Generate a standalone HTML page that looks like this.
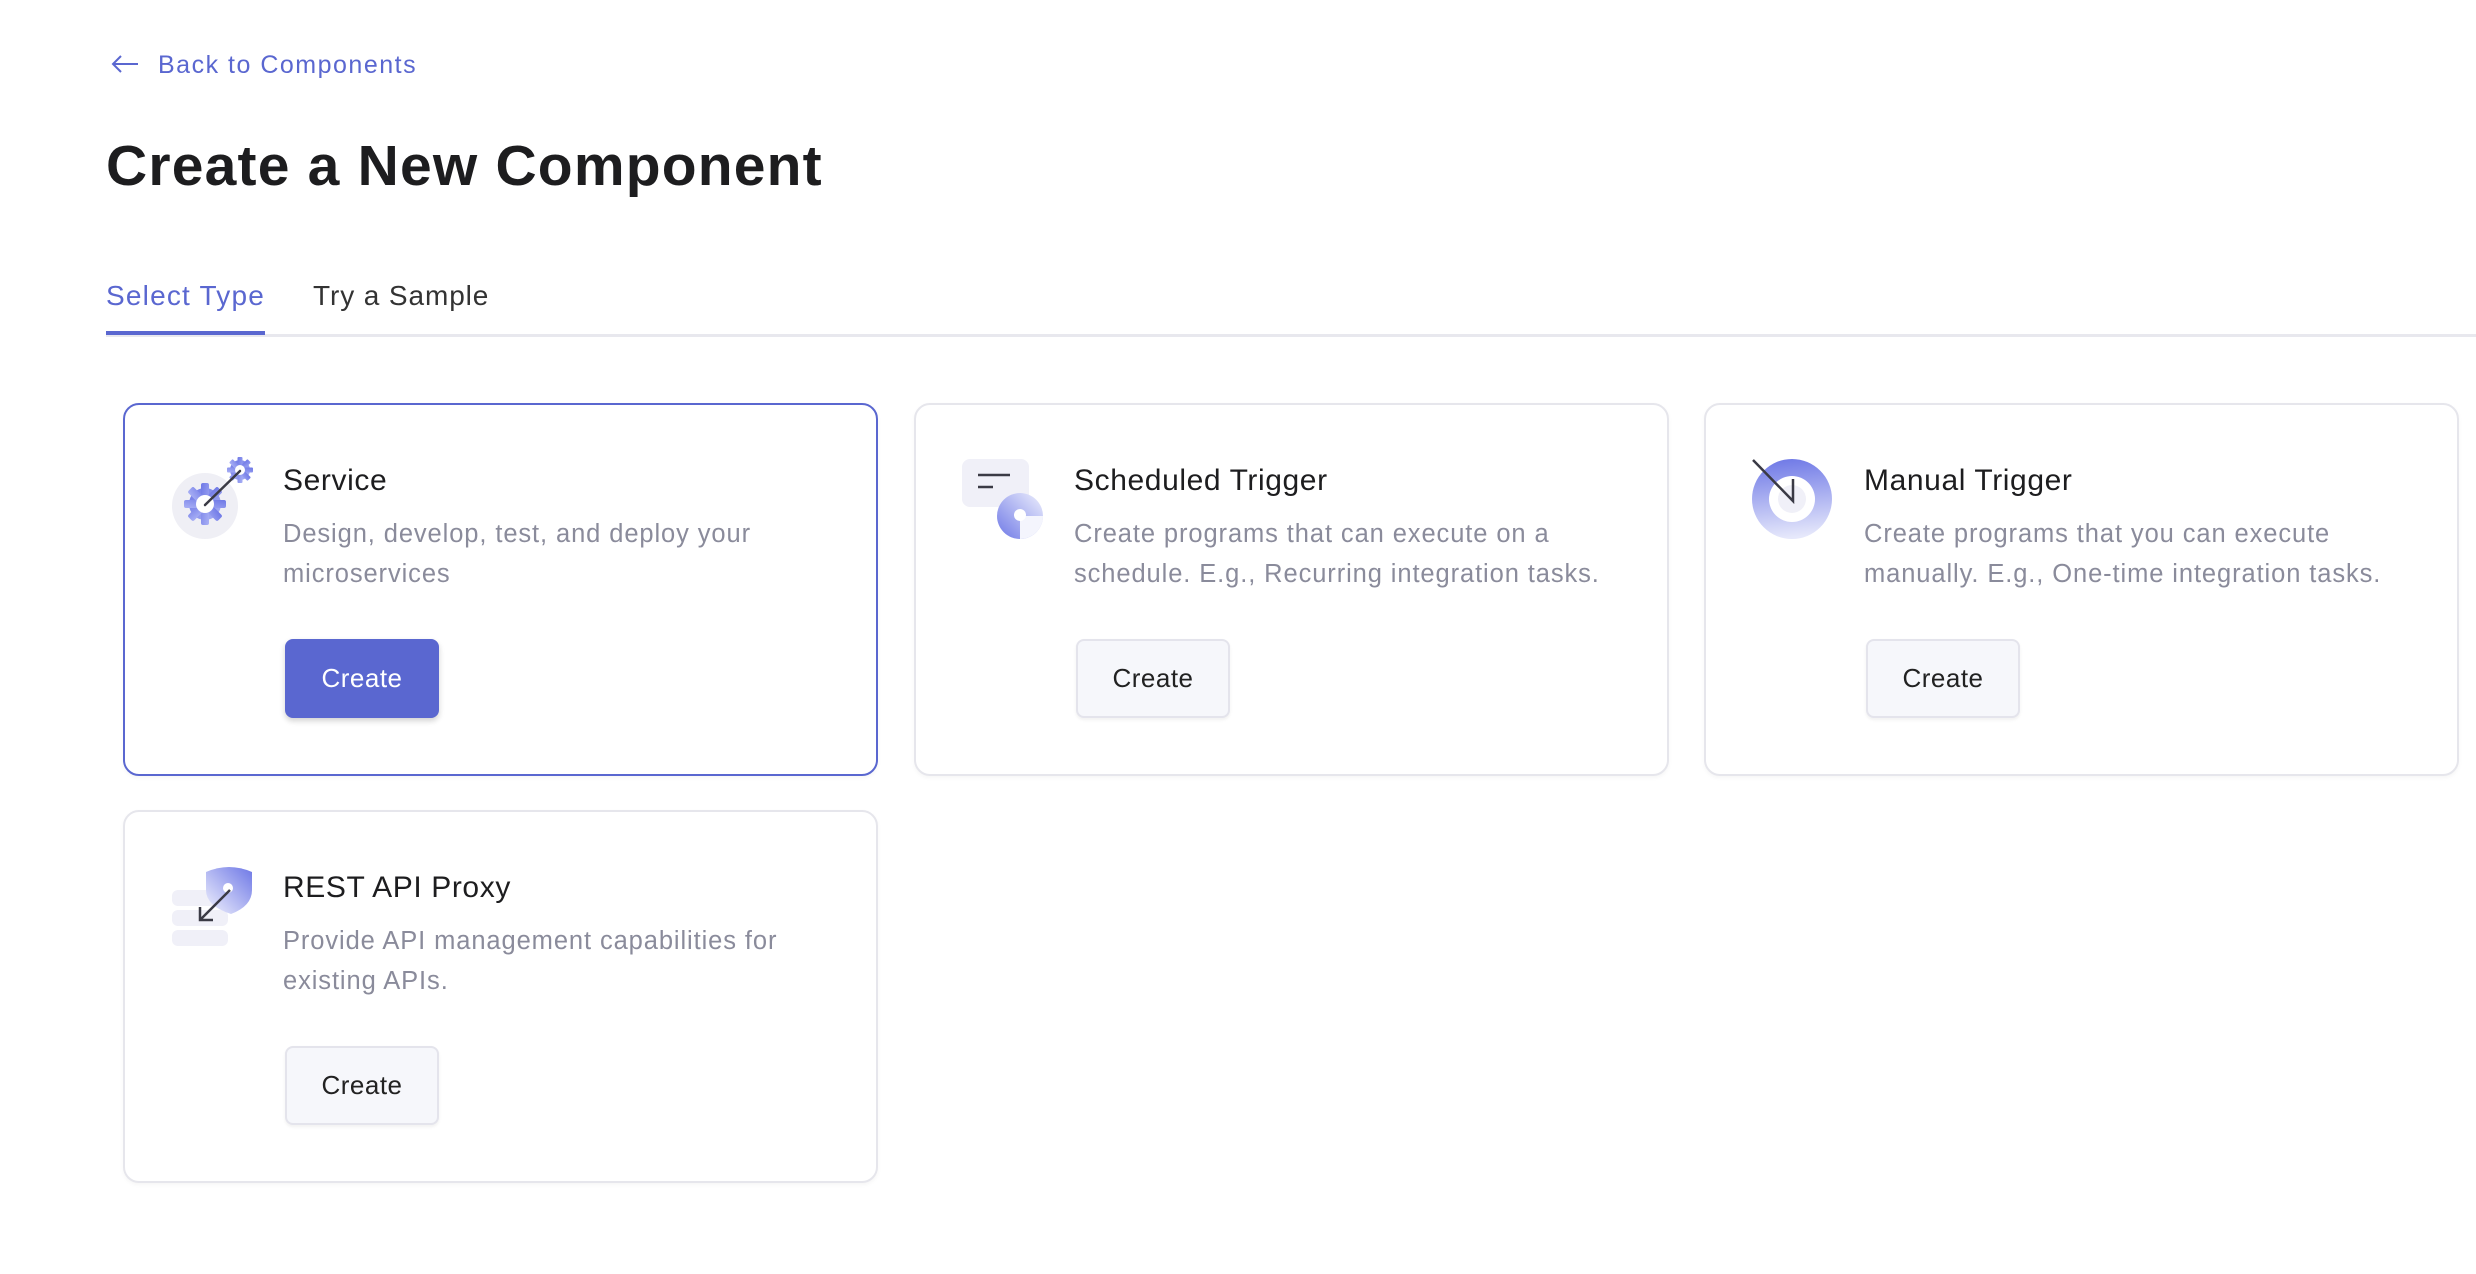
<!DOCTYPE html>
<html><head><meta charset="utf-8"><style>
*{margin:0;padding:0;box-sizing:border-box}
body{width:2476px;height:1274px;background:#fff;font-family:"Liberation Sans",sans-serif;position:relative;overflow:hidden}
.abs{position:absolute}
.back{left:110px;top:51px;color:#5a67d0;font-size:25px;white-space:nowrap;letter-spacing:1.5px}
.back svg{position:absolute;left:0;top:2px}
.back span{position:absolute;left:48px;top:0}
h1{position:absolute;left:106px;top:133px;font-size:57px;font-weight:bold;color:#1d1d1f;letter-spacing:1.2px;white-space:nowrap}
.tab{position:absolute;top:280px;font-size:28px;white-space:nowrap}
.card{position:absolute;width:755px;height:373px;border:2px solid #e6e6ec;border-radius:16px;background:#fff;box-shadow:0 2px 4px rgba(0,0,0,0.04)}
.card.sel{border-color:#5a67d0}
.card svg{position:absolute;left:35px;top:35px}
.ct{position:absolute;left:158px;top:59px;font-size:30px;color:#1d1d1f;white-space:nowrap;letter-spacing:0.6px}
.cd{position:absolute;left:158px;top:109px;font-size:25.5px;line-height:40px;color:#8a8b9b;white-space:nowrap;letter-spacing:0.9px}
.btn{position:absolute;left:160px;top:234px;width:154px;height:79px;border:2px solid #e4e4ec;border-radius:8px;background:#f6f7fb;font-size:26px;color:#222;text-align:center;line-height:75px;box-shadow:0 2px 3px rgba(0,0,0,0.06);letter-spacing:0.5px}
.btn.pri{background:#5a67d0;border-color:#5a67d0;color:#fff;box-shadow:0 3px 6px rgba(0,0,0,0.18)}
</style></head><body>
<div class="abs back"><svg width="30" height="22" viewBox="0 0 30 22"><path d="M28 11H3M11 3L3 11L11 19" fill="none" stroke="#5a67d0" stroke-width="2"/></svg><span>Back to Components</span></div>
<h1>Create a New Component</h1>
<div class="tab" style="left:106px;color:#5a67d0;letter-spacing:1.2px">Select Type</div>
<div class="tab" style="left:313px;color:#333;letter-spacing:0.9px">Try a Sample</div>
<div class="abs" style="left:106px;top:334px;width:2370px;height:3px;background:#e8e8ee"></div>
<div class="abs" style="left:106px;top:331px;width:159px;height:4px;background:#5a67d0"></div>

<svg width="0" height="0" style="position:absolute"><defs>
<linearGradient id="g1" x1="0" y1="0" x2="1" y2="1"><stop offset="0" stop-color="#6e78e6"/><stop offset="1" stop-color="#a9b0f5"/></linearGradient>
<linearGradient id="g2" x1="0" y1="1" x2="1" y2="0"><stop offset="0" stop-color="#6e78e6"/><stop offset="1" stop-color="#eef0fd"/></linearGradient>
<linearGradient id="g3" x1="0.2" y1="0" x2="0.3" y2="1"><stop offset="0" stop-color="#6e78e6"/><stop offset="1" stop-color="#e6e8fb"/></linearGradient>
<linearGradient id="g4" x1="1" y1="0" x2="0" y2="1"><stop offset="0" stop-color="#6e78e6"/><stop offset="1" stop-color="#f2f3fd"/></linearGradient>
</defs></svg>

<div class="card sel" style="left:123px;top:403px">
<svg width="110" height="110" viewBox="0 0 110 110" style="left:35px;top:35px">
<circle cx="45" cy="66" r="33" fill="#efeff5"/>
<g fill="url(#g1)"><circle cx="45" cy="64" r="16"/>
<g transform="translate(45 64)"><rect x="-4" y="-21" width="8" height="42" rx="2"/><rect x="-4" y="-21" width="8" height="42" rx="2" transform="rotate(45)"/><rect x="-4" y="-21" width="8" height="42" rx="2" transform="rotate(90)"/><rect x="-4" y="-21" width="8" height="42" rx="2" transform="rotate(135)"/></g>
<circle cx="80" cy="30" r="10"/>
<g transform="translate(80 30)"><rect x="-2.5" y="-13" width="5" height="26" rx="1"/><rect x="-2.5" y="-13" width="5" height="26" rx="1" transform="rotate(45)"/><rect x="-2.5" y="-13" width="5" height="26" rx="1" transform="rotate(90)"/><rect x="-2.5" y="-13" width="5" height="26" rx="1" transform="rotate(135)"/></g></g>
<circle cx="45" cy="64" r="9" fill="#fff"/><circle cx="80" cy="30" r="5" fill="#fff"/>
<path d="M45 65L80 31" stroke="#3a3a45" stroke-width="2.5" stroke-linecap="round"/>
</svg>
<div class="ct">Service</div>
<div class="cd">Design, develop, test, and deploy your<br>microservices</div>
<div class="btn pri">Create</div>
</div>

<div class="card" style="left:914px;top:403px">
<svg width="110" height="110" viewBox="0 0 110 110" style="left:34px;top:35px">
<rect x="12" y="19" width="67" height="48" rx="8" fill="#f0f0f8"/>
<path d="M28 35H60M28 47H43" stroke="#3a3a45" stroke-width="2.5"/>
<circle cx="70" cy="76" r="23" fill="url(#g2)"/>
<path d="M70 76V99A23 23 0 0 0 93 76Z" fill="#f4f5fd"/>
<circle cx="70" cy="75" r="6" fill="#fff"/>
</svg>
<div class="ct">Scheduled Trigger</div>
<div class="cd">Create programs that can execute on a<br>schedule. E.g., Recurring integration tasks.</div>
<div class="btn">Create</div>
</div>

<div class="card" style="left:1704px;top:403px">
<svg width="110" height="110" viewBox="0 0 110 110" style="left:34px;top:35px">
<circle cx="52" cy="59" r="40" fill="url(#g3)"/>
<circle cx="52" cy="59" r="23" fill="#fff"/>
<circle cx="52" cy="59" r="14" fill="#f0f0f8"/>
<path d="M13 20L53 61V39" fill="none" stroke="#3a3a45" stroke-width="2.5"/>
</svg>
<div class="ct">Manual Trigger</div>
<div class="cd">Create programs that you can execute<br>manually. E.g., One-time integration tasks.</div>
<div class="btn">Create</div>
</div>

<div class="card" style="left:123px;top:810px">
<svg width="110" height="110" viewBox="0 0 110 110" style="left:35px;top:38px">
<rect x="12" y="40" width="56" height="16" rx="6" fill="#f0f0f8"/>
<rect x="12" y="60" width="56" height="16" rx="6" fill="#f0f0f8"/>
<rect x="12" y="80" width="56" height="16" rx="6" fill="#f0f0f8"/>
<path d="M46 22Q69 12 92 22V40Q92 56 71 64Q46 56 46 40Z" fill="url(#g4)"/>
<circle cx="68" cy="38" r="5" fill="#fff"/>
<path d="M70 40L40 70M40 57V70H53" fill="none" stroke="#3a3a45" stroke-width="2.5"/>
</svg>
<div class="ct">REST API Proxy</div>
<div class="cd">Provide API management capabilities for<br>existing APIs.</div>
<div class="btn">Create</div>
</div>
</body></html>
